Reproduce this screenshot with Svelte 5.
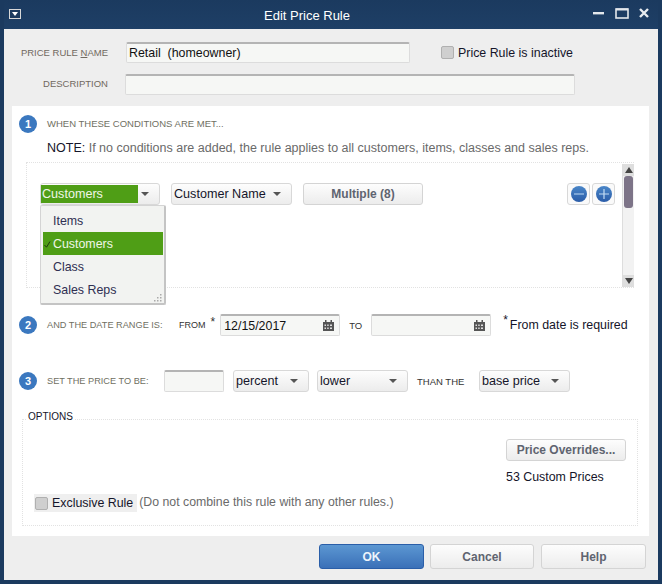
<script>
  const menu = ['Items', 'Customers', 'Class', 'Sales Reps'];
</script>

<div class="window">
  <header class="title">
    <svg class="sysicon" width="12" height="10" viewBox="0 0 12 10"><rect x="0.5" y="0.5" width="11" height="9" fill="#1c3a5e" stroke="#d8d8d8"/><path d="M3 3h6L6 7z" fill="#fff"/></svg>
    <span class="title-text">Edit Price Rule</span>
    <div class="controls">
      <svg width="12" height="12" viewBox="0 0 12 12"><rect x="0" y="5" width="11" height="2.4" fill="#e4e8ec"/></svg>
      <svg width="14" height="11" viewBox="0 0 14 11"><rect x="1" y="1" width="12" height="9" fill="none" stroke="#e4e8ec" stroke-width="1.6"/><rect x="1" y="0.5" width="12" height="2" fill="#e4e8ec"/></svg>
      <svg width="10" height="10" viewBox="0 0 10 10"><path d="M1 1l8 8M9 1l-8 8" stroke="#e8ecf0" stroke-width="2.4"/></svg>
    </div>
  </header>

  <main class="body">
    <div class="form-row first">
      <span class="flabel"><span>PRICE RULE <u>N</u>AME</span></span>
      <div class="input name">Retail&nbsp; (homeowner)</div>
      <span class="check-wrap"><span class="check"></span><span class="dark">Price Rule is inactive</span></span>
    </div>
    <div class="form-row second">
      <span class="flabel"><span>DESCRIPTION</span></span>
      <div class="input desc"></div>
    </div>

    <section class="panel">
      <div class="head one">
        <span class="badge">1</span>
        <span class="cap">WHEN THESE CONDITIONS ARE MET...</span>
      </div>
      <p class="note"><span class="dark">NOTE:</span> If no conditions are added, the rule applies to all customers, items, classes and sales reps.</p>

      <div class="box">
        <div class="box-content">
          <div class="select s1"><span class="hl">Customers</span><i class="arrow"></i></div>
          <div class="select s2"><span>Customer Name</span><i class="arrow"></i></div>
          <button class="btn multi">Multiple (8)</button>
          <div class="round-group">
            <span class="round"><svg width="18" height="18" viewBox="0 0 18 18"><defs><linearGradient id="rb" x1="0" y1="0" x2="0" y2="1"><stop offset="0" stop-color="#4a86c8"/><stop offset="1" stop-color="#2a5ca8"/></linearGradient></defs><circle cx="9" cy="9" r="8" fill="url(#rb)"/><path d="M4 9h10" stroke="#a8c8ea" stroke-width="1.2"/></svg></span>
            <span class="round"><svg width="18" height="18" viewBox="0 0 18 18"><circle cx="9" cy="9" r="8" fill="url(#rb)"/><path d="M4 9h10M9 4v10" stroke="#c4dcf4" stroke-width="1.2"/></svg></span>
          </div>
        </div>
        <div class="scroll">
          <span class="sbtn"><svg width="8" height="6" viewBox="0 0 8 6"><path d="M4 0l4 6H0z" fill="#444"/></svg></span>
          <span class="thumb"></span>
          <span class="track"></span>
          <span class="sbtn"><svg width="8" height="6" viewBox="0 0 8 6"><path d="M0 0h8L4 6z" fill="#444"/></svg></span>
        </div>
        <ul class="menu">
          {#each menu as item}
            <li class:active={item === 'Customers'}>{#if item === 'Customers'}<svg class="tick" width="7" height="7" viewBox="0 0 7 7"><path d="M0.5 4l2 2.2L6 0.5" fill="none" stroke="#1a2a10" stroke-width="0.9"/></svg>{/if}{item}</li>
          {/each}
          <svg class="grip" width="9" height="9" viewBox="0 0 9 9"><path d="M7 1h1.5v1.5H7zM4 4h1.5v1.5H4zM7 4h1.5v1.5H7zM1 7h1.5v1.5H1zM4 7h1.5v1.5H4zM7 7h1.5v1.5H7z" fill="#aaa"/></svg>
        </ul>
      </div>

      <div class="head two">
        <span class="badge">2</span>
        <span class="cap w-date">AND THE DATE RANGE IS:</span>
        <span class="cap from">FROM</span><span class="star">*</span>
        <div class="input date"><span>12/15/2017</span><svg class="cal" width="11" height="11" viewBox="0 0 11 11"><path d="M0 2h11v9H0z" fill="#555"/><path d="M2 0h1.5v3H2zM7.5 0H9v3H7.5z" fill="#555"/><path d="M1.5 4.5h1.5V6H1.5zM4.2 4.5h1.5V6H4.2zM7 4.5h2V6H7zM1.5 7.5h1.5V9H1.5zM4.2 7.5h1.5V9H4.2zM7 7.5h2V9H7z" fill="#ddd"/></svg></div>
        <span class="cap to">TO</span>
        <div class="input date to-date"><span></span><svg class="cal" width="11" height="11" viewBox="0 0 11 11"><path d="M0 2h11v9H0z" fill="#555"/><path d="M2 0h1.5v3H2zM7.5 0H9v3H7.5z" fill="#555"/><path d="M1.5 4.5h1.5V6H1.5zM4.2 4.5h1.5V6H4.2zM7 4.5h2V6H7zM1.5 7.5h1.5V9H1.5zM4.2 7.5h1.5V9H4.2zM7 7.5h2V9H7z" fill="#ddd"/></svg></div>
        <span class="req"><sup>*</sup>From date is required</span>
      </div>

      <div class="head three">
        <span class="badge">3</span>
        <span class="cap w-set">SET THE PRICE TO BE:</span>
        <div class="input amount"></div>
        <div class="select s3"><span>percent</span><i class="arrow"></i></div>
        <div class="select s4"><span>lower</span><i class="arrow"></i></div>
        <span class="cap than">THAN THE</span>
        <div class="select s5"><span>base price</span><i class="arrow"></i></div>
      </div>

      <div class="options">
        <span class="legend">OPTIONS</span>
        <div class="right">
          <button class="btn over">Price Overrides...</button>
          <span class="dark custom">53 Custom Prices</span>
        </div>
        <div class="excl">
          <span class="excl-box"><span class="check"></span><span class="dark">Exclusive Rule</span></span>
          <span class="muted">(Do not combine this rule with any other rules.)</span>
        </div>
      </div>
    </section>

    <footer class="foot">
      <button class="btn big ok">OK</button>
      <button class="btn big cancel">Cancel</button>
      <button class="btn big help">Help</button>
    </footer>
  </main>
</div>

<style>
  :global(body) { margin: 0; }
  .window {
    width: 662px; height: 584px; box-sizing: border-box;
    background: #1b3a5f; padding: 0 4px 4px;
    display: flex; flex-direction: column;
    font: 12.4px "Liberation Sans", Arial, sans-serif; color: #6a6a6a;
    overflow: hidden;
  }
  .title { height: 29px; flex: none; display: flex; align-items: center; position: relative;
    background: linear-gradient(#1b3a5f, #1e3f66); }
  .sysicon { margin: -1px 0 0 5px; }
  .title-text { position: absolute; left: 260px; top: 8px; color: #fff; font-size: 13px; }
  .controls { margin-left: auto; display: flex; align-items: center; gap: 10px; padding-right: 9px; margin-top: -3px; }
  .body {
    flex: 1; display: flex; flex-direction: column; min-height: 0;
    background-color: #eeeeee;
    background-image: radial-gradient(#f7f7f7 0.6px, transparent 0.7px);
    background-size: 4px 4px;
  }
  .form-row { display: flex; align-items: center; height: 21px; }
  .first { margin-top: 13px; }
  .second { margin-top: 11px; }
  .second .flabel { margin-top: -3px; }
  .flabel { width: 104px; flex: none; text-align: right; font-size: 9.5px; color: #70695f; }
  .input {
    box-sizing: border-box; height: 22px; background: #f6f7f5;
    border: 1px solid #dcdcdc; border-top: 2px solid #b4b4b4; border-radius: 2px;
    display: flex; align-items: center; color: #111;
  }
  .form-row .input { height: 21px; }
  .name { width: 284px; margin-left: 18px; padding-left: 2px; }
  .desc { width: 450px; margin-left: 17px; }
  .check-wrap { display: flex; align-items: center; gap: 4px; margin-left: 31px; }
  .check { width: 11px; height: 11px; flex: none; border: 1px solid #b0b0b0; background: #cfcfcf; border-radius: 2px; }
  .dark { color: #15152a; }
  .panel {
    position: relative; flex: none; margin: 11px 9px 0 8px; height: 430px; background: #fff;
    box-sizing: border-box; padding-top: 9px;
  }
  .head { display: flex; align-items: center; padding-left: 7px; }
  .one { height: 18px; }
  .badge {
    width: 18px; height: 18px; flex: none; border-radius: 50%; background: #3b78bf; color: #fff;
    font: bold 11px/18px "Liberation Sans", sans-serif; text-align: center;
  }
  .cap { font-size: 9.5px; color: #6f6f62; white-space: nowrap; }
  .one .cap, .w-date, .w-set { margin-left: 10px; }
  .one .cap { margin-top: -2px; }
  .note { margin: 8px 0 0 35px; font-size: 12.5px; line-height: 14px; color: #6a6a6a; white-space: nowrap; }
  .box {
    position: relative; margin: 7px 0 0 14px; width: 608px; height: 126px; box-sizing: border-box;
    border: 1px dotted #e2e2e2; border-right: none; display: flex;
  }
  .box-content { flex: 1; display: flex; align-items: flex-start; padding: 20px 0 0 13px; }
  .select {
    box-sizing: border-box; height: 22px; border: 1px solid #d8d8d8; border-radius: 3px;
    background: linear-gradient(#fdfdfd, #ececec); display: flex; align-items: center; padding: 0 2px; color: #15152a; flex: none; font-size: 12.6px;
  }
  .select .arrow { margin-left: auto; margin-right: 8px; width: 0; height: 0; border: 4px solid transparent; border-top: 4px solid #555; border-bottom: 0; }
  .s1 { width: 120px; padding-left: 0; }
  .hl { background: #4f9e16; color: #f0f6e8; width: 96px; height: 18px; line-height: 18px; padding-left: 1px; }
  .s2 { width: 121px; margin-left: 11px; }
  .multi { width: 120px; margin-left: 11px; height: 22px; font-weight: bold; color: #6a6a78; }
  .btn {
    box-sizing: border-box; border: 1px solid #d4d4d4; border-radius: 3px;
    background: linear-gradient(#fdfdfd, #ececec); font: bold 12px "Liberation Sans", sans-serif; color: #5f6470; padding: 0;
  }
  .round-group { margin-left: 144px; display: flex; gap: 2px; }
  .round { box-sizing: border-box; width: 23px; height: 22px; border: 1px solid #d8d8d8; border-radius: 3px; display: flex; align-items: center; justify-content: center; background: #fafafa; }
  .scroll { width: 11px; flex: none; display: flex; flex-direction: column; margin: 1px 0 0; background: #f2f2f2; border-left: 1px solid #ddd; }
  .sbtn { height: 12px; flex: none; background: #dedede; display: flex; align-items: center; justify-content: center; }
  .thumb { height: 32px; flex: none; background: #7d7488; border-radius: 3px; margin: 0 1px; }
  .track { flex: 1; }
  .menu {
    position: absolute; left: 13px; top: 42px; width: 126px; height: 100px; margin: 0; padding: 3px 0 0 2px; list-style: none; box-sizing: border-box;
    background: #f2f3f1; border: 1px solid #d4d4d4; border-bottom: 2px solid #c4c4c4; border-right: 2px solid #c4c4c4; border-radius: 2px; color: #2f2f52;
  }
  .menu li { position: relative; height: 23px; line-height: 25px; padding-left: 10px; margin-right: 1px; }
  .menu li.active { background: #4f9e16; color: #f0f6e8; }
  .tick { position: absolute; left: 1px; top: 9px; }
  .grip { position: absolute; right: 2px; bottom: 1px; }
  .two { margin-top: 26px; height: 22px; }
  .w-date { width: 132px; font-size: 9.2px; }
  .from { margin-left: 0; font-size: 9px; color: #333; }
  .star { color: #333; margin: -6px 5px 0 5px; font-size: 12px; }
  .date { width: 120px; padding: 0 5px 0 3px; justify-content: space-between; }
  .to { margin-left: 9px; width: 22px; color: #333; }
  .req { margin-left: 12px; color: #15152a; white-space: nowrap; }
  .req sup { font-size: 12px; line-height: 0; margin-right: 2px; }
  .three { margin-top: 34px; height: 22px; }
  .w-set { width: 117px; font-size: 9.2px; }
  .amount { width: 60px; }
  .s3 { width: 76px; margin-left: 9px; }
  .s4 { width: 91px; margin-left: 8px; }
  .than { margin-left: 9px; width: 62px; color: #333; }
  .s5 { width: 91px; }
  .options {
    position: relative; margin: 27px 0 0 10px; width: 616px; height: 107px; box-sizing: border-box;
    border: 1px dotted #e2e2e2; display: flex; flex-direction: column;
  }
  .legend { position: absolute; left: 3px; top: -9px; background: #fff; padding: 0 2px; font-size: 10px; color: #15152a; }
  .right { display: flex; flex-direction: column; align-items: flex-start; margin: 19px 0 0 483px; }
  .over { width: 120px; height: 22px; }
  .custom { margin-top: 9px; }
  .excl { display: flex; align-items: center; margin: auto 0 13px 11px; }
  .excl-box { display: flex; align-items: center; gap: 4px; background: #efefef; height: 18px; padding: 0 4px 0 1px; }
  .muted { margin: -2px 0 0 2px; font-size: 12.3px; }
  .foot { flex: 1; display: flex; justify-content: flex-end; align-items: flex-start; gap: 6px; padding: 8px 12px 0 0; }
  .big { width: 105px; height: 25px; font-size: 12px; }
  .cancel { width: 104px; }
  .help { margin-left: 1px; }
  .ok { background: linear-gradient(#5c97d2, #3a70b8); border-color: #2a5ea8; color: #eef4fb; }
</style>
